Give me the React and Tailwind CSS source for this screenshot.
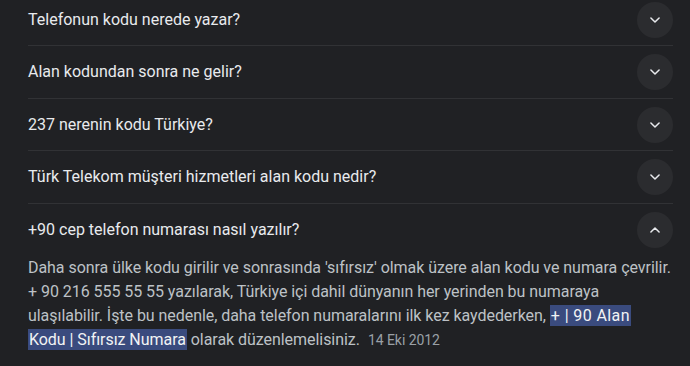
import React from 'react';

const questions = [
  'Telefonun kodu nerede yazar?',
  'Alan kodundan sonra ne gelir?',
  '237 nerenin kodu Türkiye?',
  'Türk Telekom müşteri hizmetleri alan kodu nedir?',
];

function Chevron({ up }) {
  return (
    <svg width="14" height="14" viewBox="0 0 24 24" fill="none">
      <path
        d={up ? 'M5 15.5l7-7 7 7' : 'M5 8.5l7 7 7-7'}
        stroke="#e8eaed"
        strokeWidth="2.6"
        strokeLinecap="round"
        strokeLinejoin="round"
      />
    </svg>
  );
}

function Row({ text, open }) {
  return (
    <div className={`flex h-[52px] items-center justify-between ${open ? '' : 'border-b border-[#313235]'}`}>
      <span className="text-[16px] text-[#e8eaed]">{text}</span>
      <div className="flex h-9 w-9 items-center justify-center rounded-full bg-[#2b2c2f]">
        <Chevron up={open} />
      </div>
    </div>
  );
}

export default function App() {
  return (
    <div
      className="h-[366px] w-[690px] overflow-hidden bg-[#202124]"
      style={{ fontFamily: 'Roboto, "Noto Sans", sans-serif' }}
    >
      <div className="mt-[-6px] pl-[28px] pr-[17px]">
        {questions.map((q) => (
          <div key={q} className="mb-[0.5px]">
            <Row text={q} />
          </div>
        ))}
        <Row text="+90 cep telefon numarası nasıl yazılır?" open />
        <p className="whitespace-nowrap text-[16px] leading-[24px] tracking-[-0.05px] text-[#bdc1c6]">
          Daha sonra ülke kodu girilir ve sonrasında 'sıfırsız' olmak üzere alan kodu ve numara çevrilir.
          <br />+ 90 216 555 55 55 yazılarak, Türkiye içi dahil dünyanın her yerinden bu numaraya
          <br />ulaşılabilir. İşte bu nedenle, daha telefon numaralarını ilk kez kaydederken,{' '}
          <span className="bg-[#3a4b7e] px-[1px] py-[1px] tracking-[0.4px] text-[#f1f3f4]">+ | 90 Alan</span>
          <br />
          <span className="bg-[#3a4b7e] px-[1px] py-[1px] text-[#f1f3f4]">Kodu | Sıfırsız Numara</span> olarak
          düzenlemelisiniz.
          <span className="ml-2 text-[14px] text-[#9aa0a6]">14 Eki 2012</span>
        </p>
      </div>
    </div>
  );
}
